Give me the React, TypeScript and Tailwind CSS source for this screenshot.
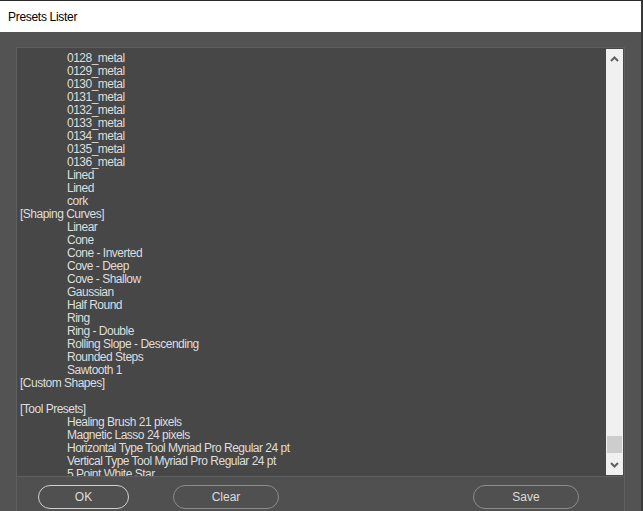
import React from "react";

const rows: [string, boolean][] = [
  ["0128_metal", true],
  ["0129_metal", true],
  ["0130_metal", true],
  ["0131_metal", true],
  ["0132_metal", true],
  ["0133_metal", true],
  ["0134_metal", true],
  ["0135_metal", true],
  ["0136_metal", true],
  ["Lined", true],
  ["Lined", true],
  ["cork", true],
  ["[Shaping Curves]", false],
  ["Linear", true],
  ["Cone", true],
  ["Cone - Inverted", true],
  ["Cove - Deep", true],
  ["Cove - Shallow", true],
  ["Gaussian", true],
  ["Half Round", true],
  ["Ring", true],
  ["Ring - Double", true],
  ["Rolling Slope - Descending", true],
  ["Rounded Steps", true],
  ["Sawtooth 1", true],
  ["[Custom Shapes]", false],
  ["", false],
  ["[Tool Presets]", false],
  ["Healing Brush 21 pixels", true],
  ["Magnetic Lasso 24 pixels", true],
  ["Horizontal Type Tool Myriad Pro Regular 24 pt", true],
  ["Vertical Type Tool Myriad Pro Regular 24 pt", true],
  ["5 Point White Star", true],
];

export default function App() {
  return (
    <div
      className="w-[643px] h-[511px] bg-[#3a3a3a] overflow-hidden flex flex-col tracking-[-0.5px]"
      style={{ fontFamily: '"Liberation Sans", Arial, sans-serif' }}
    >
      <div className="h-[1px] bg-[#2b2b2b]" />
      <div className="w-[641px] h-[31px] bg-white flex items-center pl-[8px] text-[12px] text-black tracking-[-0.3px]">
        Presets Lister
      </div>
      <div className="w-[641px] flex-1 bg-[#535353] pt-[15px] px-[16px] flex flex-col">
        <div className="h-[430px] border border-[#5f5f5f] bg-[#474747] flex">
          <div className="flex-1 overflow-hidden pl-[3px] pt-[4px] text-[12px] leading-[13px] text-[#dedede]">
            {rows.map(([t, indent], i) => (
              <div key={i} className={`h-[13px] whitespace-nowrap ${indent ? "pl-[47px]" : ""}`}>
                {t}
              </div>
            ))}
          </div>
          <div className="w-[17px] bg-[#f0f0f0] my-[1px] mr-[1px] flex flex-col">
            <div className="h-[20px] flex items-center justify-center">
              <svg width="9" height="6" viewBox="0 0 9 6">
                <path d="M1 5 L4.5 1.5 L8 5" stroke="#606060" strokeWidth="2" fill="none" />
              </svg>
            </div>
            <div className="flex-1 flex flex-col justify-end">
              <div className="h-[17px] mx-[1px] bg-[#cdcdcd] mb-[2px]" />
            </div>
            <div className="h-[20px] flex items-center justify-center">
              <svg width="9" height="6" viewBox="0 0 9 6">
                <path d="M1 1 L4.5 4.5 L8 1" stroke="#606060" strokeWidth="2" fill="none" />
              </svg>
            </div>
          </div>
        </div>
        <div className="flex-1 border-x border-[#5f5f5f] bg-[#505050] flex items-start pt-[8px] text-[12px] text-[#dcdcdc] tracking-normal">
          <button className="ml-[21px] w-[91px] h-[24px] rounded-full border border-[#d0d0d0] flex items-center justify-center">
            OK
          </button>
          <button className="ml-[44px] w-[106px] h-[24px] rounded-full border border-[#8c8c8c] flex items-center justify-center">
            Clear
          </button>
          <button className="ml-[194px] w-[106px] h-[24px] rounded-full border border-[#8c8c8c] flex items-center justify-center">
            Save
          </button>
        </div>
      </div>
    </div>
  );
}
